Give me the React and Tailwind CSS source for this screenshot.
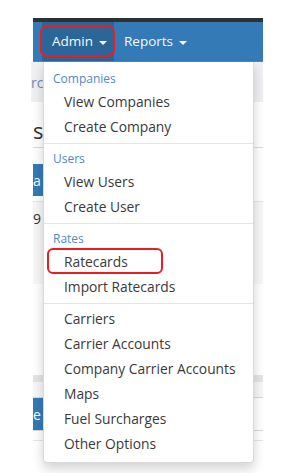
import React from "react";

const Caret = () => (
  <span className="inline-block w-0 h-0 border-t-[4px] border-x-[4px] border-x-transparent border-t-white ml-[6px] mt-[2px]" />
);

const Header = ({ children }) => (
  <div className="h-[23px] flex items-center pl-[9px] text-[12px] text-[#5089c3]">{children}</div>
);

const Item = ({ children }) => (
  <div className="h-[25px] flex items-center pl-[20px] text-[13.8px] text-[#3a3a3a] whitespace-nowrap">{children}</div>
);

const Divider = () => <div className="my-[3px] h-px bg-[#e5e5e5]" />;

export default function App() {
  return (
    <div
      className="w-[293px] h-[473px] bg-white relative overflow-hidden"
      style={{ fontFamily: '"Open Sans", "Liberation Sans", sans-serif' }}
    >
      <div className="ml-[33px] mt-[18px] w-[230px] relative">
        <div className="h-[4px] bg-[#2f3033]" />
        <nav className="h-[40px] bg-[#337ab7] flex items-stretch border-b border-[#4a8ac2] text-[#f4f8fb] text-[13.5px]">
          <div className="ml-[9px] w-[72px] bg-[#2b6699] flex items-center pl-[10px]">
            Admin
            <Caret />
          </div>
          <div className="ml-[10px] flex items-center">
            Reports
            <Caret />
          </div>
        </nav>

        {/* page body behind the menu */}
        <div className="flex flex-col">
          <div className="h-[40px] bg-[#f0f0f2] flex items-center text-[14px] text-[#6a8fb5] -ml-[2px]">
            rc
          </div>
          <div className="h-[46px] bg-white border-b border-[#dcdcdc] flex items-end pb-[6px] text-[22px] text-[#333] leading-none">
            s
          </div>
          <div className="h-[16px]" />
          <div className="h-[32px] flex">
            <div className="w-[10px] bg-[#337ab7] text-white text-[14px] flex items-center">
              <span>a</span>
            </div>
          </div>
          <div className="h-[6px] border-b border-[#e6e6e6]" />
          <div className="h-[82px] bg-[#f7f7f8] text-[14px] text-[#333] pt-[6px]">9</div>
          <div className="h-[91px] bg-white" />
          <div className="h-[7px] bg-[#e4e5e8]" />
          <div className="h-[16px] bg-[#f7f7f8] border-b border-[#d8d8d8]" />
          <div className="h-[33px] flex border-b border-[#d8d8d8]">
            <div className="w-[10px] bg-[#337ab7] text-white text-[14px] flex items-center">
              <span>e</span>
            </div>
          </div>
          <div className="h-[10px] border-b border-[#e6e6e6]" />
        </div>

        {/* red highlight on Admin */}
        <div className="absolute left-[7px] top-[7px] w-[75px] h-[32px] border-[2.5px] border-[#ec1c24] rounded-[7px]" />

        {/* dropdown menu */}
        <div className="absolute left-[10px] top-[44px] w-[211px] bg-white border border-[rgba(0,0,0,0.15)] border-t-0 rounded-b-[4px] shadow-[0_6px_12px_rgba(0,0,0,0.175)] pt-[5px] pb-[5px]">
          <Header>Companies</Header>
          <Item>View Companies</Item>
          <Item>Create Company</Item>
          <Divider />
          <Header>Users</Header>
          <Item>View Users</Item>
          <Item>Create User</Item>
          <Divider />
          <Header>Rates</Header>
          <Item>Ratecards</Item>
          <Item>Import Ratecards</Item>
          <Divider />
          <Item>Carriers</Item>
          <Item>Carrier Accounts</Item>
          <Item>Company Carrier Accounts</Item>
          <Item>Maps</Item>
          <Item>Fuel Surcharges</Item>
          <Item>Other Options</Item>

          <div className="absolute left-[3px] top-[186px] w-[116px] h-[26px] border-[2.5px] border-[#ec1c24] rounded-[6px]" />
        </div>
      </div>
    </div>
  );
}
